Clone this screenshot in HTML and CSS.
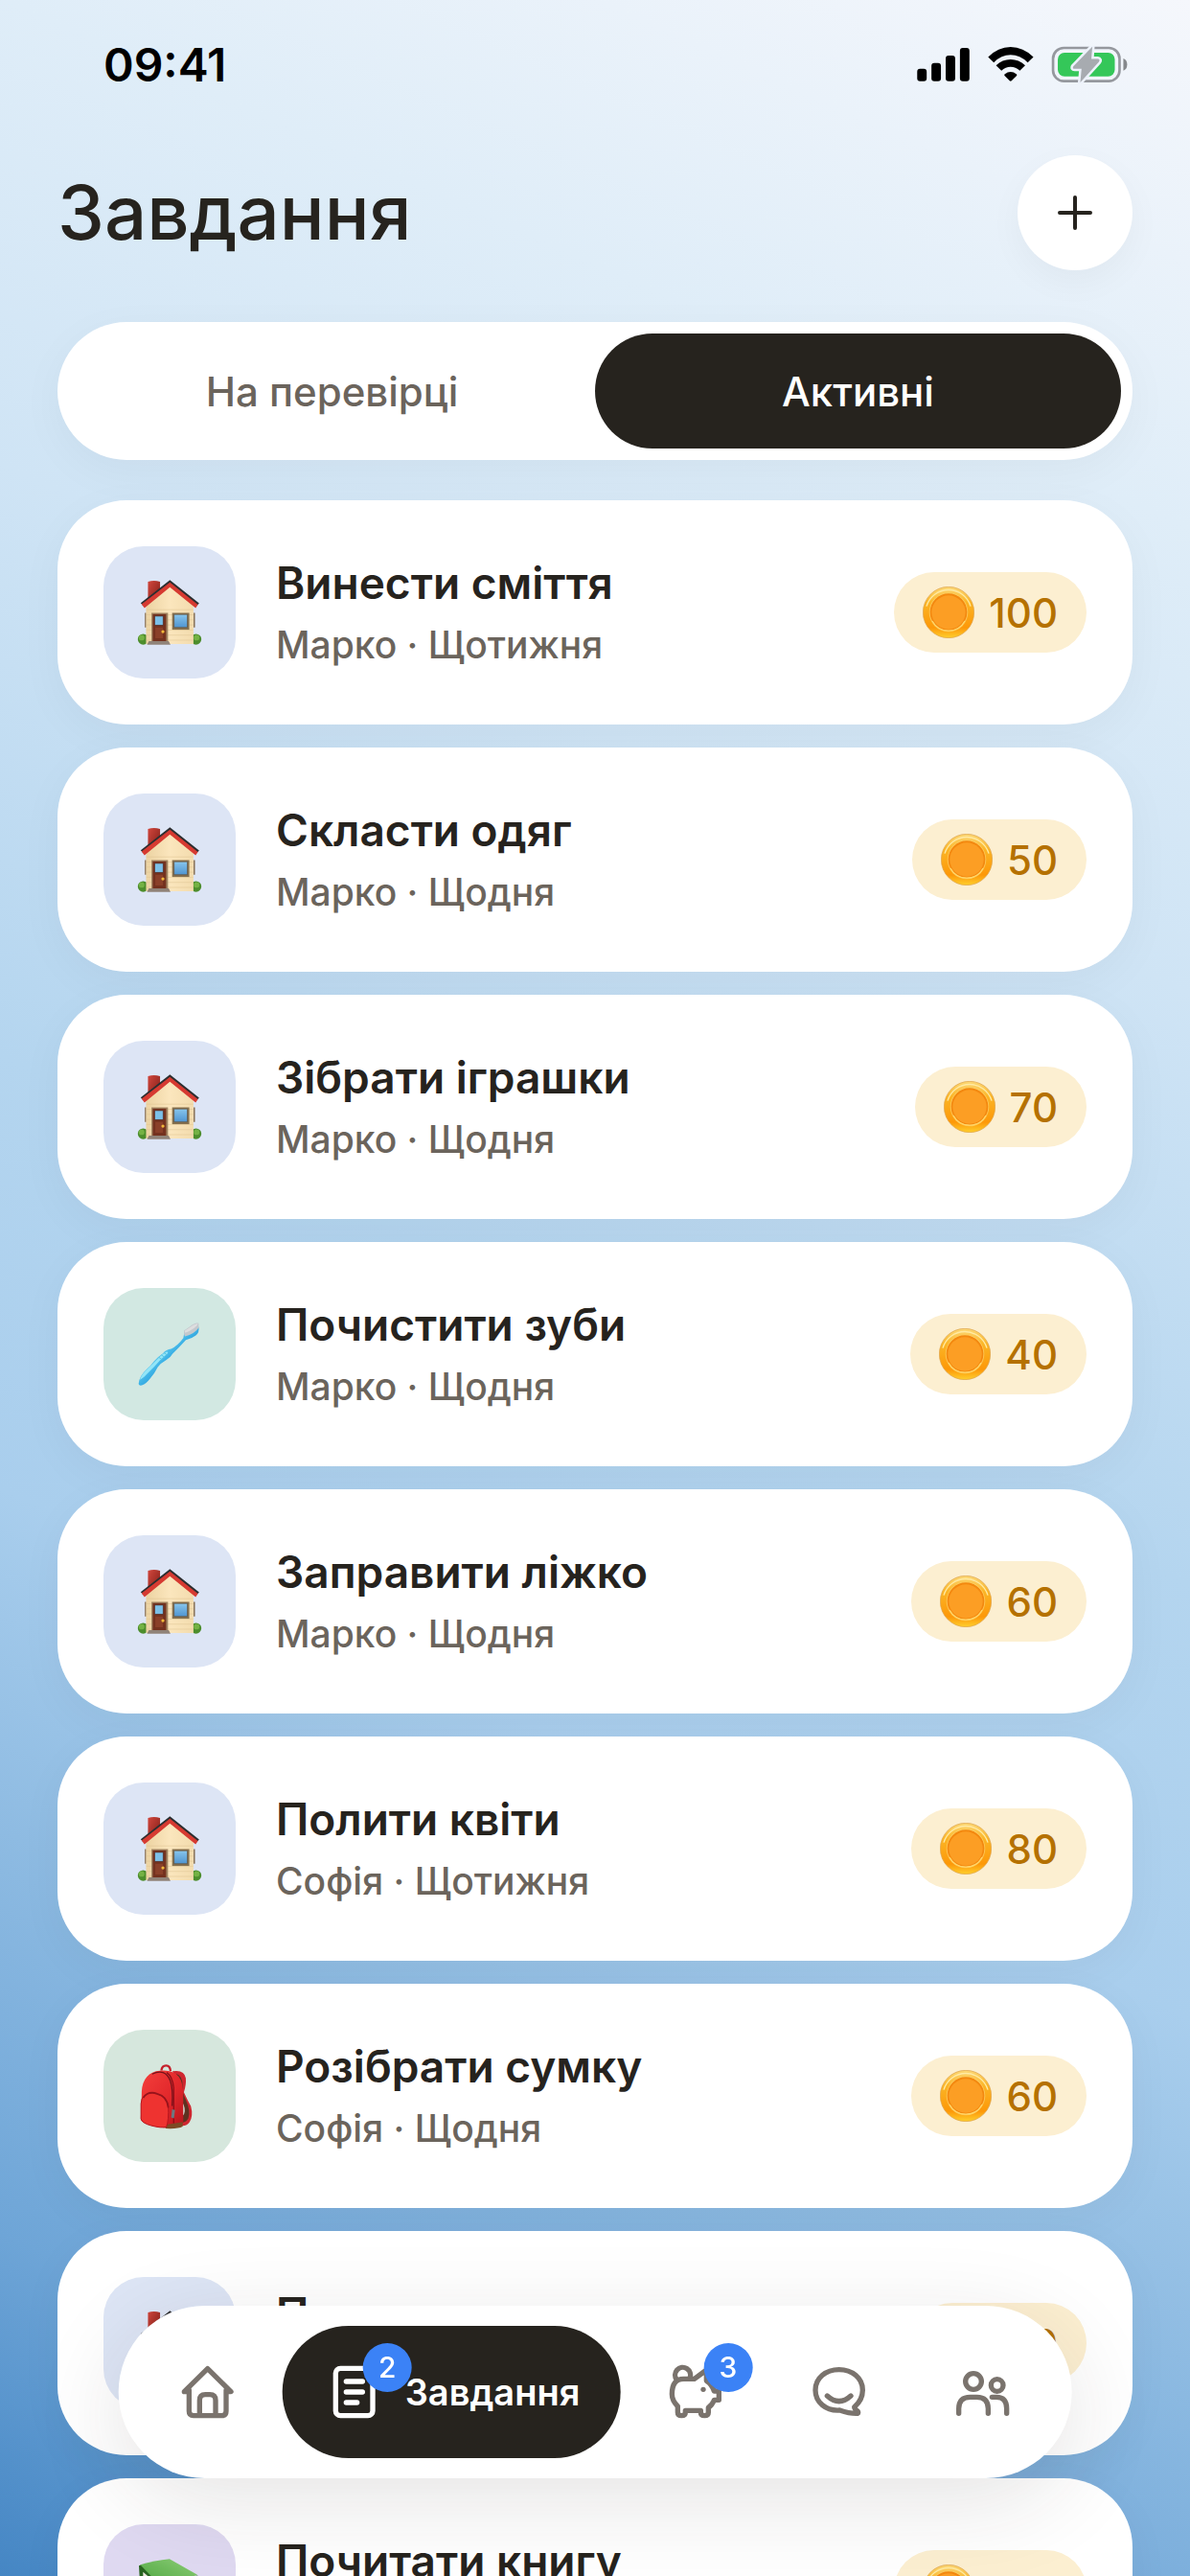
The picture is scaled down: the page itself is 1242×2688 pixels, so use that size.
FILE: index.html
```html
<!DOCTYPE html>
<html lang="uk">
<head>
    <meta charset="UTF-8">
    <meta name="viewport" content="width=device-width, initial-scale=1">
    <title>Завдання</title>
    <link rel="stylesheet" href="styles.css">
</head>
<body>
    <!-- Shared pictures -->
    <svg class="sprite" aria-hidden="true">
        <defs>
            <linearGradient id="wallFill" x1="0" x2="1"><stop offset="0" stop-color="#ecd3a2"/><stop offset=".5" stop-color="#fbe6bd"/><stop offset="1" stop-color="#f3dcae"/></linearGradient>
            <linearGradient id="chimneyFill" x1="0" y1="0" x2="1" y2="1"><stop offset="0" stop-color="#d2463c"/><stop offset="1" stop-color="#7d1d17"/></linearGradient>
            <linearGradient id="glassFill" x1="0" y1="0" x2="0" y2="1"><stop offset="0" stop-color="#87c5ec"/><stop offset="1" stop-color="#4f94d0"/></linearGradient>
            <linearGradient id="coinRim" x1="0" y1="0" x2="0" y2="1"><stop offset="0" stop-color="#fcd877"/><stop offset=".3" stop-color="#fbb526"/><stop offset=".8" stop-color="#fd9808"/><stop offset="1" stop-color="#ffcf2e"/></linearGradient>
            <linearGradient id="bagFill" x1="0" y1="0" x2="1" y2="1"><stop offset="0" stop-color="#f5403c"/><stop offset=".6" stop-color="#e0262a"/><stop offset="1" stop-color="#b5141c"/></linearGradient>
            <linearGradient id="brushFill" x1="0" y1="0" x2="1" y2="1"><stop offset=".3" stop-color="#7fdcf2"/><stop offset=".5" stop-color="#3db2e6"/><stop offset=".8" stop-color="#1377bd"/></linearGradient>
            <linearGradient id="bookFill" x1="0" y1="1" x2="1" y2="0"><stop offset="0" stop-color="#4aa33d"/><stop offset="1" stop-color="#8ecf78"/></linearGradient>
        </defs>

        <symbol id="house" viewBox="66 74 204 208">
            <path d="M100 80q19-6 38 0v42l-38 28z" fill="url(#chimneyFill)"/>
            <path d="M90 178h5v46h-5zM243 178h5v46h-5z" fill="#8b7459"/>
            <circle cx="85" cy="261" r="17" fill="#4c8d2c"/>
            <circle cx="80" cy="256" r="9" fill="#74b244"/>
            <circle cx="251" cy="261" r="17" fill="#4c8d2c"/>
            <circle cx="253" cy="256" r="9" fill="#74b244"/>
            <path d="M94 154l75-68 74 68v122H94z" fill="url(#wallFill)"/>
            <path d="M95 168h147M95 184h147M95 200h147M95 216h147M95 232h147M95 248h147M95 264h147" stroke="#dfc491" stroke-width="1.5"/>
            <path d="M77 147l92-72 92 73-8 8-84-67-84 67z" fill="#2c2e30"/>
            <path d="M80 151l89-69 88 70-7 11-81-66-80 66z" fill="#d63a31"/>
            <path d="M111 178h52v92h-52z" fill="#a08360"/>
            <path d="M115 182h42v86h-42z" fill="#74321f"/>
            <path d="M121 188h27v29h-27z" fill="#7cc0e8" stroke="#512013" stroke-width="2"/>
            <path d="M123 224h24v34h-24z" fill="#8a4029"/>
            <circle cx="147" cy="237" r="5" fill="#f2b73a"/>
            <path d="M176 178h54v53h-54z" fill="#86714f"/>
            <path d="M182 183h42v41h-42z" fill="url(#glassFill)" stroke="#5f4d38" stroke-width="2"/>
            <path d="M103 267h62l6 11H97z" fill="#908378"/>
        </symbol>

        <symbol id="toothbrush" viewBox="129 147 204 204">
            <path d="M134 340q2-24 26-46 12-10 22-24 14-16 28-25 10-12 26-14 20-10 38-34l4-22 44-13q3 18-9 27-14 11-31 14-22 24-42 44-6 12-20 19-18 10-26 22-10 20-24 36-12 16-26 21-11 2-10-5z" fill="url(#brushFill)"/>
            <path d="M138 328q4-16 24-34 18-18 34-34 10-12 26-20 6 0 2 6-22 18-40 40-20 20-32 32-10 8-14 10z" fill="#a5f0fb" opacity=".8"/>
            <path d="M198 258l10 7M205 250l10 7M213 243l10 7" stroke="#58c4e2" stroke-width="3"/>
            <path d="M276 174l27-19q12-8 19-4v14q-12 19-43 27-4-8-3-18z" fill="#c4c8cd"/>
            <path d="M278 175l27-18q10-6 15-4-8 15-40 28z" fill="#dededf"/>
        </symbol>

        <symbol id="backpack" viewBox="129 159 204 208">
            <path d="M240 184q38-6 42 22 2 20-6 44 10 22 22 44 8 30-4 50-12 18-38 9l4-18q22 0 22-26 0-20-22-46-6-50-20-79z" fill="#cf2730"/>
            <path d="M252 192q20 6 20 38-2 22 10 44 16 34 8 58-8 14-26 14v-18q18-4 14-28-2-16-18-34 0-50-8-74z" fill="#5d3120"/>
            <path d="M205 182q2-16 15-16t14 18" fill="none" stroke="#c5202b" stroke-width="7"/>
            <path d="M143 262q-2-64 45-78 50-10 72 17 14 18 14 62v80q-2 20-48 20-80-10-86-28z" fill="url(#bagFill)"/>
            <path d="M222 188q18 12 22 48v112" fill="none" stroke="#8e0f18" stroke-width="4"/>
            <path d="M176 193q40-20 57 20 10 30 6 80" fill="none" stroke="#74131a" stroke-width="4"/>
            <path d="M222 352l50-8v14q-14 8-54 6z" fill="#7d4a24"/>
            <path d="M141 286q2-34 36-33 46 4 50 40 2 44-6 66-14 5-48-4-30-8-32-22z" fill="#ee3330" stroke="#b5151d" stroke-width="3"/>
            <path d="M148 268q16-24 44-13 32 8 35 44" fill="none" stroke="#96131b" stroke-width="5"/>
            <path d="M239 304l9 2-3 26-9-3z" fill="#6d7880"/>
        </symbol>

        <symbol id="book" viewBox="129 147 204 204">
            <path d="M135 170l8-3 62 52 114-18v34l-112 32-70-62z" fill="#27631f"/>
            <path d="M148 190l58 50 108-20v14l-108 30-58-50z" fill="#ece9df"/>
            <path d="M139 167q44-14 92-18l87 50-112 38z" fill="url(#bookFill)"/>
        </symbol>

        <symbol id="coin" viewBox="0 0 162 162">
            <circle cx="81" cy="81" r="80" fill="url(#coinRim)" stroke="#dba04a" stroke-width="2"/>
            <path d="M12 62a72 72 0 0 1 138 0" fill="none" stroke="#ffeaa3" stroke-width="4"/>
            <circle cx="81" cy="81" r="61" fill="#ffe08a" opacity=".5"/>
            <circle cx="81" cy="80" r="58" fill="#f3880f"/>
            <circle cx="81" cy="81" r="53" fill="#fc9e24"/>
            <path d="M30 108a58 58 0 0 0 102 0" fill="none" stroke="#ffd769" stroke-width="4"/>
        </symbol>
    </svg>

    <div class="screen">
        <div class="status-bar">
            <span class="time">09:41</span>
            <svg class="status-icons" viewBox="81 54 664 118" role="img" aria-label="Мережа, Wi-Fi, батарея">
                <rect x="81" y="126" width="30" height="39" rx="9"/>
                <rect x="126" y="108" width="30" height="57" rx="9"/>
                <rect x="171" y="84" width="30" height="81" rx="9"/>
                <rect x="216" y="60" width="30" height="105" rx="9"/>
                <path d="M305 89q31-32 71-32t72 32l-18 17q-24-24-54-24t-53 24z"/>
                <path d="M330 115q20-19 46-19t46 19l-17 17q-13-12-29-12t-29 12z"/>
                <path d="M357 143q19-15 38 0 2 2 0 5l-16 16q-3 2-6 0l-16-16q-2-3 0-5z"/>
                <rect x="510" y="60" width="210" height="105" rx="34" fill="none" stroke="#95989e" stroke-width="8"/>
                <path d="M732 93q12 4 12 19t-12 20z" fill="#85888c"/>
                <rect x="525" y="75" width="180" height="75" rx="21" fill="#34c759"/>
                <path d="M634 56l-60 62q-4 8 4 8h22l-4 43 59-65q5-8-4-9h-20z" fill="#a7abb0" stroke="#edf2fb" stroke-width="15" stroke-linejoin="round"/>
                <path d="M634 56l-60 62q-4 8 4 8h22l-4 43 59-65q5-8-4-9h-20z" fill="#a7abb0"/>
            </svg>
        </div>

        <header class="header">
            <h1>Завдання</h1>
            <button class="add-button" type="button" aria-label="Додати завдання">
                <svg viewBox="0 0 36 36"><path d="M18 2v32M2 18h32"/></svg>
            </button>
        </header>

        <div class="segmented">
            <button class="segment" type="button">На перевірці</button>
            <button class="segment selected" type="button">Активні</button>
        </div>

        <ul class="task-list">
            <li class="task">
                <div class="task-icon"><svg><use href="#house"/></svg></div>
                <div class="task-text">
                    <h2>Винести сміття</h2>
                    <p>Марко · Щотижня</p>
                </div>
                <div class="reward"><svg><use href="#coin"/></svg>100</div>
            </li>
            <li class="task">
                <div class="task-icon"><svg><use href="#house"/></svg></div>
                <div class="task-text">
                    <h2>Скласти одяг</h2>
                    <p>Марко · Щодня</p>
                </div>
                <div class="reward"><svg><use href="#coin"/></svg>50</div>
            </li>
            <li class="task">
                <div class="task-icon"><svg><use href="#house"/></svg></div>
                <div class="task-text">
                    <h2>Зібрати іграшки</h2>
                    <p>Марко · Щодня</p>
                </div>
                <div class="reward"><svg><use href="#coin"/></svg>70</div>
            </li>
            <li class="task">
                <div class="task-icon hygiene"><svg><use href="#toothbrush"/></svg></div>
                <div class="task-text">
                    <h2>Почистити зуби</h2>
                    <p>Марко · Щодня</p>
                </div>
                <div class="reward"><svg><use href="#coin"/></svg>40</div>
            </li>
            <li class="task">
                <div class="task-icon"><svg><use href="#house"/></svg></div>
                <div class="task-text">
                    <h2>Заправити ліжко</h2>
                    <p>Марко · Щодня</p>
                </div>
                <div class="reward"><svg><use href="#coin"/></svg>60</div>
            </li>
            <li class="task">
                <div class="task-icon"><svg><use href="#house"/></svg></div>
                <div class="task-text">
                    <h2>Полити квіти</h2>
                    <p>Софія · Щотижня</p>
                </div>
                <div class="reward"><svg><use href="#coin"/></svg>80</div>
            </li>
            <li class="task">
                <div class="task-icon school"><svg><use href="#backpack"/></svg></div>
                <div class="task-text">
                    <h2>Розібрати сумку</h2>
                    <p>Софія · Щодня</p>
                </div>
                <div class="reward"><svg><use href="#coin"/></svg>60</div>
            </li>
            <li class="task">
                <div class="task-icon"><svg><use href="#house"/></svg></div>
                <div class="task-text">
                    <h2>П</h2>
                    <p>Софія</p>
                </div>
                <div class="reward"><svg><use href="#coin"/></svg>50</div>
            </li>
            <li class="task">
                <div class="task-icon reading"><svg><use href="#book"/></svg></div>
                <div class="task-text">
                    <h2>Почитати книгу</h2>
                    <p>Софія</p>
                </div>
                <div class="reward"><svg><use href="#coin"/></svg>100</div>
            </li>
        </ul>

        <nav class="tab-bar">
            <a class="tab" href="#home" aria-label="Головна">
                <span class="tab-icon">
                    <svg viewBox="27 81 234 234"><path d="M86 197H71l73-72 73 72h-15M86 192v66q0 14 14 14h88q14 0 14-14v-66M119 268v-44q0-18 18-18h14q18 0 18 18v44"/></svg>
                </span>
            </a>
            <a class="tab current" href="#tasks" aria-current="page">
                <span class="tab-icon">
                    <svg viewBox="480 81 234 234"><rect x="539" y="124" width="116" height="148" rx="15"/><path d="M572 165h51M572 198h51M572 231h34"/></svg>
                    <span class="badge">2</span>
                </span>
                Завдання
            </a>
            <a class="tab" href="#savings" aria-label="Скарбничка">
                <span class="tab-icon">
                    <svg viewBox="18 81 234 234"><path d="M77 160a24 24 0 1 1 41-6M98 157h34l38-28v34q16 9 24 32h15v28h-15q-6 16-18 24v15q0 10-12 10t-12-10v-6h-48v6q0 10-12 10t-12-10v-19q-18-18-18-38 0-48 36-48z"/><circle class="dot" cx="160" cy="190" r="8"/></svg>
                    <span class="badge">3</span>
                </span>
            </a>
            <a class="tab" href="#chat" aria-label="Чат">
                <span class="tab-icon">
                    <svg viewBox="468 81 234 234"><path d="M633 245q26-22 26-53c0-38-33-64-74-64s-74 26-74 64 33 66 76 63q32 11 56 10 4-2 0-7-9-6-10-13zM548 210q37 34 74 0"/></svg>
                </span>
            </a>
            <a class="tab" href="#family" aria-label="Родина">
                <span class="tab-icon">
                    <svg viewBox="914 81 234 234"><circle cx="1002" cy="165" r="25"/><circle cx="1076" cy="177" r="19"/><path d="M956 265v-15q0-36 36-36h20q36 0 36 36v15M1060 214h14q32 0 32 36v15"/></svg>
                </span>
            </a>
        </nav>
    </div>
</body>
</html>
```
FILE: styles.css
```css
* {
    box-sizing: border-box;
}
body {
    margin: 0;
    font-family: Inter, "Noto Sans", sans-serif;
    color: #26231e;
}
h1, h2, p, ul {
    margin: 0;
    padding: 0;
}
button {
    font-family: inherit;
    border: none;
    cursor: pointer;
}
.sprite {
    position: absolute;
    width: 0;
    height: 0;
}
.screen {
    height: 100vh;
    padding: 0 60px;
    overflow: hidden;
    background: linear-gradient(204deg, #f5f7fc 0%, #dfedf8 17%, #cfe4f5 32%, #b4d5ef 51%, #a9ceed 65%, #8ebbe2 76%, #6ea5d7 89%, #4586c4 100%);
}

/* Status bar */
.status-bar {
    display: flex;
    align-items: center;
    justify-content: space-between;
    height: 162px;
    padding: 0 4px 27px 48px;
}
.time {
    font-size: 48px;
    font-weight: 600;
    color: #000;
}
.status-icons {
    width: 222px;
    height: 39px;
}

/* Header */
.header {
    display: flex;
    align-items: center;
    justify-content: space-between;
}
.header h1 {
    font-size: 78px;
    font-weight: 500;
    line-height: 100px;
}
.add-button {
    display: flex;
    align-items: center;
    justify-content: center;
    width: 120px;
    height: 120px;
    border-radius: 50%;
    background: #fff;
    box-shadow: 0 12px 36px rgba(38, 35, 30, 0.04);
}
.add-button svg {
    width: 36px;
    height: 36px;
    stroke: #26231e;
    stroke-width: 4;
    stroke-linecap: round;
}

/* Segmented control */
.segmented {
    display: flex;
    margin-top: 54px;
    padding: 12px;
    border-radius: 72px;
    background: #fff;
    box-shadow: 0 12px 48px rgba(38, 35, 30, 0.04);
}
.segment {
    flex: 1;
    height: 120px;
    border-radius: 60px;
    background: none;
    font-size: 42px;
    font-weight: 500;
    color: #6b645c;
}
.segment.selected {
    background: #26231e;
    color: #fff;
}

/* Tasks */
.task-list {
    display: flex;
    flex-direction: column;
    gap: 24px;
    margin-top: 42px;
    list-style: none;
}
.task {
    display: flex;
    align-items: center;
    gap: 42px;
    padding: 48px;
    border-radius: 72px;
    background: #fff;
    box-shadow: 0 12px 48px rgba(38, 35, 30, 0.04);
}
.task-icon {
    display: flex;
    align-items: center;
    justify-content: center;
    width: 138px;
    height: 138px;
    border-radius: 42px;
    background: #dde5f5;
}
.task-icon.hygiene {
    background: #d2e8e2;
}
.task-icon.school {
    background: #d6e7dd;
}
.task-icon.reading {
    background: #dfd9f1;
}
.task-icon svg {
    width: 68px;
    height: 69px;
}
.task-text {
    flex: 1;
}
.task-text h2 {
    font-size: 46px;
    font-weight: 600;
    line-height: 60px;
}
.task-text p {
    margin-top: 8px;
    font-size: 39px;
    font-weight: 500;
    line-height: 54px;
    color: #6b645c;
}
.reward {
    display: flex;
    align-items: center;
    gap: 15px;
    height: 84px;
    padding: 0 30px;
    border-radius: 42px;
    background: #fcefd1;
    font-size: 42px;
    font-weight: 500;
    color: #b57100;
}
.reward svg {
    width: 54px;
    height: 54px;
}

/* Tab bar floats over the list */
.tab-bar {
    position: fixed;
    left: 50%;
    bottom: 102px;
    transform: translateX(-50%);
    display: flex;
    gap: 6px;
    padding: 21px;
    border-radius: 90px;
    background: #fff;
    box-shadow: 0 24px 96px rgba(38, 35, 30, 0.12);
}
.tab {
    display: flex;
    align-items: center;
    justify-content: center;
    gap: 14px;
    min-width: 144px;
    height: 138px;
    border-radius: 69px;
    font-size: 38px;
    font-weight: 600;
    color: #7a736d;
    text-decoration: none;
}
.tab.current {
    padding: 0 42px 0 36px;
    background: #26231e;
    color: #fff;
}
.tab-icon {
    position: relative;
    width: 78px;
    height: 78px;
}
.tab-icon svg {
    display: block;
    width: 78px;
    height: 78px;
    fill: none;
    stroke: currentColor;
    stroke-width: 16;
    stroke-linecap: round;
    stroke-linejoin: round;
}
.tab-icon .dot {
    fill: currentColor;
    stroke: none;
}
.badge {
    position: absolute;
    top: -12px;
    left: 48px;
    width: 51px;
    height: 51px;
    border-radius: 50%;
    background: #3b82f6;
    font-size: 30px;
    font-weight: 500;
    line-height: 51px;
    text-align: center;
    color: #fff;
}
```
